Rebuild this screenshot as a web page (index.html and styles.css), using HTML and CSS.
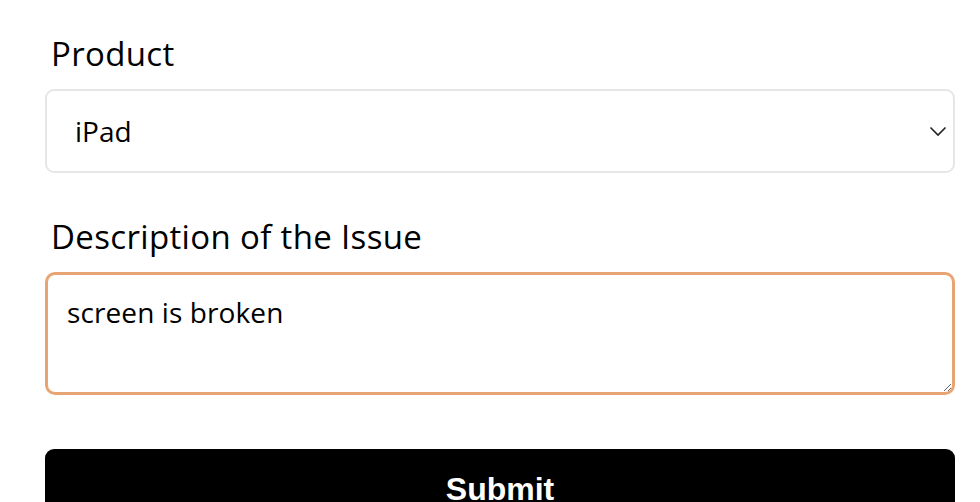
FILE: index.html
```html
<!DOCTYPE html>
<html>
<head>
<meta charset="utf-8">
<link rel="stylesheet" href="styles.css">
</head>
<body>
<form class="form">
  <div class="field">
    <label class="label" for="product">Product</label>
    <div class="select-wrap">
      <select class="select" id="product">
        <option>iPad</option>
      </select>
      <svg class="chevron" width="18" height="11" viewBox="0 0 18 11"><path d="M1.5 1.5 L9 9 L16.5 1.5" fill="none" stroke="#222" stroke-width="1.6"/></svg>
    </div>
  </div>
  <div class="field">
    <label class="label" for="desc">Description of the Issue</label>
    <textarea class="textarea" id="desc">screen is broken</textarea>
  </div>
  <button class="submit" type="button">Submit</button>
</form>
</body>
</html>
```
FILE: styles.css
```css
html, body {
  margin: 0;
  padding: 0;
  background: #fff;
  overflow: hidden;
}
.form {
  display: flex;
  flex-direction: column;
  padding: 34px 25px 0 45px;
  font-family: "Open Sans", sans-serif;
  color: #000;
}
.field {
  display: flex;
  flex-direction: column;
}
.field + .field {
  margin-top: 44px;
}
.label {
  font-size: 33px;
  line-height: 40px;
  letter-spacing: 0.35px;
  margin: 0 0 15px 6px;
}
.select-wrap {
  position: relative;
}
.select {
  appearance: none;
  -webkit-appearance: none;
  width: 100%;
  height: 84px;
  box-sizing: border-box;
  border: 2px solid #e6e6e6;
  border-radius: 9px;
  background: #fff;
  padding: 0 0 0 28px;
  font-family: "Open Sans", sans-serif;
  font-size: 28px;
  color: #000;
  outline: none;
  margin: 0;
}
.chevron {
  position: absolute;
  right: 8px;
  top: 37px;
  pointer-events: none;
}
.textarea {
  width: 100%;
  height: 123px;
  box-sizing: border-box;
  border: 3px solid #e8a472;
  border-radius: 10px;
  padding: 18px 19px;
  font-family: "Open Sans", sans-serif;
  font-size: 28px;
  letter-spacing: 0.1px;
  color: #000;
  outline: none;
  margin: 0;
  resize: vertical;
  display: block;
}
.submit {
  margin-top: 54px;
  width: 100%;
  height: 80px;
  border: none;
  border-radius: 9px;
  background: #000;
  color: #fff;
  font-family: "Liberation Sans", Arial, sans-serif;
  font-weight: bold;
  font-size: 32px;
  padding: 22px 0 0;
  display: flex;
  justify-content: center;
  align-items: flex-start;
  line-height: normal;
}
```
